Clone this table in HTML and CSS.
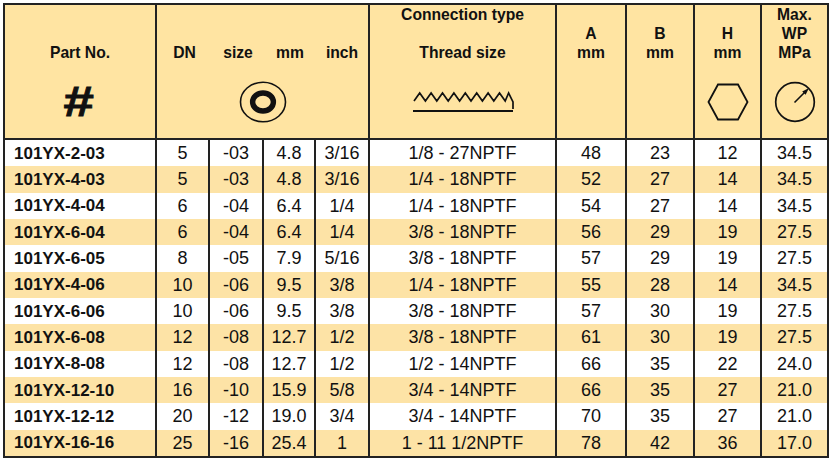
FILE: index.html
```html
<!DOCTYPE html>
<html lang="en">
<head>
<meta charset="utf-8">
<title>101YX fittings</title>
<link rel="stylesheet" href="styles.css">
</head>
<body>
<table class="spec">
  <colgroup>
    <col class="c-part"><col class="c-dn"><col class="c-size"><col class="c-mm"><col class="c-inch">
    <col class="c-conn"><col class="c-a"><col class="c-b"><col class="c-h"><col class="c-wp">
  </colgroup>
  <thead>
    <tr>
      <th class="first">
        <div class="hcell">
          <div class="hlab"><span>Part No.</span></div>
          <div class="hicon"><span class="hash">#</span></div>
        </div>
      </th>
      <th colspan="4">
        <div class="hcell">
          <div class="hlab dn-labs"><span>DN</span><span>size</span><span>mm</span><span>inch</span></div>
          <div class="hicon">
            <svg width="50" height="44" viewBox="0 0 50 44" aria-hidden="true">
              <ellipse cx="25" cy="22" rx="22.5" ry="19.8" fill="none" stroke="#111" stroke-width="1.6"/>
              <ellipse cx="25" cy="22" rx="10.4" ry="9" fill="none" stroke="#111" stroke-width="5.4"/>
            </svg>
          </div>
        </div>
      </th>
      <th>
        <div class="hcell">
          <div class="hlab"><span>Connection type</span><span>&nbsp;</span><span>Thread size</span></div>
          <div class="hicon">
            <svg width="104" height="24" viewBox="0 0 104 24" aria-hidden="true">
              <path d="M2 21 H102" fill="none" stroke="#111" stroke-width="1.9"/>
              <path d="M3 11 L8.7 3 L14.4 11 L20.1 3 L25.8 11 L31.5 3 L37.2 11 L42.9 3 L48.6 11 L54.3 3 L60 11 L65.7 3 L71.4 11 L77.1 3 L82.8 11 L88.5 3 L94.2 11 L97.6 3 L102 12 V19" fill="none" stroke="#111" stroke-width="1.7" stroke-linejoin="miter"/>
            </svg>
          </div>
        </div>
      </th>
      <th>
        <div class="hcell">
          <div class="hlab"><span>A</span><span>mm</span></div>
          <div class="hicon"></div>
        </div>
      </th>
      <th>
        <div class="hcell">
          <div class="hlab"><span>B</span><span>mm</span></div>
          <div class="hicon"></div>
        </div>
      </th>
      <th>
        <div class="hcell">
          <div class="hlab"><span>H</span><span>mm</span></div>
          <div class="hicon">
            <svg width="42" height="38" viewBox="0 0 42 38" aria-hidden="true">
              <polygon points="1.5,19 11,1.5 31,1.5 40.5,19 31,36.5 11,36.5" fill="none" stroke="#111" stroke-width="1.8" stroke-linejoin="miter"/>
            </svg>
          </div>
        </div>
      </th>
      <th>
        <div class="hcell">
          <div class="hlab"><span>Max.</span><span>WP</span><span>MPa</span></div>
          <div class="hicon">
            <svg width="42" height="42" viewBox="0 0 42 42" aria-hidden="true">
              <circle cx="21" cy="21" r="19.3" fill="none" stroke="#111" stroke-width="1.7"/>
              <path d="M20.5 21.5 L31.5 10.5" fill="none" stroke="#111" stroke-width="1.6"/>
              <polygon points="35,7 28.2,10.4 31.6,13.8" fill="#111"/>
            </svg>
          </div>
        </div>
      </th>
    </tr>
  </thead>
  <tbody>
    <tr><td class="part">101YX-2-03</td><td>5</td><td>-03</td><td>4.8</td><td>3/16</td><td>1/8 - 27NPTF</td><td>48</td><td>23</td><td>12</td><td>34.5</td></tr>
    <tr><td class="part">101YX-4-03</td><td>5</td><td>-03</td><td>4.8</td><td>3/16</td><td>1/4 - 18NPTF</td><td>52</td><td>27</td><td>14</td><td>34.5</td></tr>
    <tr><td class="part">101YX-4-04</td><td>6</td><td>-04</td><td>6.4</td><td>1/4</td><td>1/4 - 18NPTF</td><td>54</td><td>27</td><td>14</td><td>34.5</td></tr>
    <tr><td class="part">101YX-6-04</td><td>6</td><td>-04</td><td>6.4</td><td>1/4</td><td>3/8 - 18NPTF</td><td>56</td><td>29</td><td>19</td><td>27.5</td></tr>
    <tr><td class="part">101YX-6-05</td><td>8</td><td>-05</td><td>7.9</td><td>5/16</td><td>3/8 - 18NPTF</td><td>57</td><td>29</td><td>19</td><td>27.5</td></tr>
    <tr><td class="part">101YX-4-06</td><td>10</td><td>-06</td><td>9.5</td><td>3/8</td><td>1/4 - 18NPTF</td><td>55</td><td>28</td><td>14</td><td>34.5</td></tr>
    <tr><td class="part">101YX-6-06</td><td>10</td><td>-06</td><td>9.5</td><td>3/8</td><td>3/8 - 18NPTF</td><td>57</td><td>30</td><td>19</td><td>27.5</td></tr>
    <tr><td class="part">101YX-6-08</td><td>12</td><td>-08</td><td>12.7</td><td>1/2</td><td>3/8 - 18NPTF</td><td>61</td><td>30</td><td>19</td><td>27.5</td></tr>
    <tr><td class="part">101YX-8-08</td><td>12</td><td>-08</td><td>12.7</td><td>1/2</td><td>1/2 - 14NPTF</td><td>66</td><td>35</td><td>22</td><td>24.0</td></tr>
    <tr><td class="part">101YX-12-10</td><td>16</td><td>-10</td><td>15.9</td><td>5/8</td><td>3/4 - 14NPTF</td><td>66</td><td>35</td><td>27</td><td>21.0</td></tr>
    <tr><td class="part">101YX-12-12</td><td>20</td><td>-12</td><td>19.0</td><td>3/4</td><td>3/4 - 14NPTF</td><td>70</td><td>35</td><td>27</td><td>21.0</td></tr>
    <tr><td class="part">101YX-16-16</td><td>25</td><td>-16</td><td>25.4</td><td>1</td><td>1 - 11 1/2NPTF</td><td>78</td><td>42</td><td>36</td><td>17.0</td></tr>
  </tbody>
</table>
</body>
</html>
```

FILE: styles.css
```css
html, body {
  margin: 0;
  padding: 0;
  background: #ffffff;
}

body {
  font-family: "Liberation Sans", Arial, Helvetica, sans-serif;
  color: #111111;
}

.spec {
  border-collapse: separate;
  border-spacing: 0;
  border: 2px solid #222222;
  margin: 3px 0 0 3px;
  width: 826px;
  table-layout: fixed;
}

.c-part { width: 150px; }
.c-dn { width: 53px; }
.c-size { width: 54px; }
.c-mm { width: 52px; }
.c-inch { width: 54px; }
.c-conn { width: 187px; }
.c-a { width: 70px; }
.c-b { width: 68px; }
.c-h { width: 67px; }
.c-wp { width: 67px; }

.spec th,
.spec td {
  padding: 0;
  border-left: 2px solid #222222;
}

.spec th.first,
.spec td:first-child {
  border-left: none;
}

.spec th {
  background: #ffe4a2;
  border-bottom: 2px solid #222222;
  vertical-align: top;
  font-weight: bold;
  font-size: 15.7px;
  line-height: 19px;
  height: 135px;
  box-sizing: border-box;
}

.hcell {
  height: 133px;
  display: flex;
  flex-direction: column;
}

.hlab {
  height: 58px;
  display: flex;
  flex-direction: column;
  justify-content: flex-end;
  align-items: center;
  padding-bottom: 1px;
  box-sizing: border-box;
}

.hlab.dn-labs {
  display: grid;
  grid-template-columns: 55px 52px 52px 52px;
  align-content: end;
  justify-items: center;
}

.hicon {
  flex: 1;
  display: flex;
  align-items: center;
  justify-content: center;
  padding-top: 3px;
}

.hash {
  display: inline-block;
  font-size: 42px;
  line-height: 42px;
  font-weight: bold;
  transform: scaleX(1.3);
  margin-left: -3px;
  -webkit-text-stroke: 0.8px #111111;
}

.spec td {
  height: 26.33px;
  font-size: 18px;
  line-height: 1;
  text-align: center;
  vertical-align: middle;
  white-space: nowrap;
}

.spec td.part {
  text-align: left;
  padding-left: 9px;
  font-weight: bold;
  font-size: 17px;
}

.spec tbody tr:nth-child(even) td {
  background: #fde3a6;
}
```
